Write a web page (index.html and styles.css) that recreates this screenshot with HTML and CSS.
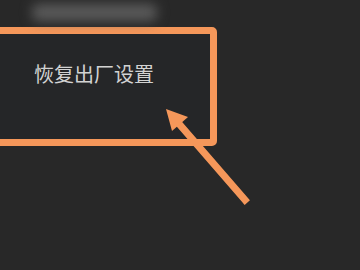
FILE: index.html
```html
<!DOCTYPE html>
<html>
<head>
	<title>恢复出厂设置</title>
	<meta charset="utf-8">
	<link rel="stylesheet" href="styles.css">
</head>
<body>
	<section class="screen">
		<div class="top-row"><div class="blur-bar"></div></div>
		<div class="menu-item">
			<span class="label">恢复出厂设置</span>
		</div>
		<svg class="arrow" width="360" height="270" viewBox="0 0 360 270">
			<line x1="245" y1="200" x2="174" y2="118" stroke="#f5975a" stroke-width="7" stroke-linecap="square"/>
			<polygon points="166,109 188,117 172,131" fill="#f5975a"/>
		</svg>
	</section>
</body>
</html>
```
FILE: styles.css
```css
*{
	margin: 0;
	padding: 0;
	box-sizing: border-box;
}
body{
	background: #282828;
	width: 360px;
	height: 270px;
	overflow: hidden;
	font-family: "Noto Sans CJK SC", "Noto Sans", sans-serif;
}
.screen{
	position: relative;
	width: 360px;
	height: 270px;
}
.top-row{
	height: 27px;
	padding: 4px 0 0 32px;
}
.blur-bar{
	width: 125px;
	height: 17px;
	background: #5a5a5a;
	border-radius: 6px;
	filter: blur(6px);
}
.menu-item{
	width: 227px;
	height: 119px;
	margin-left: -10px;
	border: 7px solid #f5975a;
	border-radius: 5px;
	background: #252628;
	padding: 28px 0 0 37px;
}
.label{
	display: block;
	color: #d2d2d2;
	font-size: 20px;
	line-height: 24px;
}
.arrow{
	position: absolute;
	left: 0;
	top: 0;
}
```
